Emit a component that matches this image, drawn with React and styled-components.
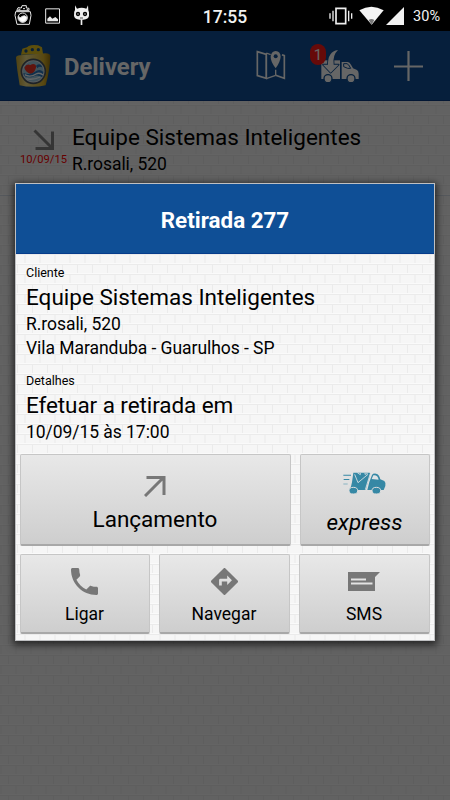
import React from "react";
import styled, { createGlobalStyle, css } from "styled-components";

const brickTile = encodeURIComponent(
  `<svg xmlns="http://www.w3.org/2000/svg" width="15" height="20">
    <rect width="15" height="20" fill="#f6f6f6"/>
    <path d="M0 .5H15M0 10.5H15M1.5 1V10M9 11V20" stroke="#ebebeb" fill="none"/>
    <path d="M0 9.5H15M0 19.5H15" stroke="#fafafa" fill="none"/>
  </svg>`
);

const App = () => {
  return (
    <Screen>
      <GlobalStyle />

      <StatusBar>
        <StatusLeft>
          <FlaskIcon />
          <PictureIcon />
          <CyanIcon />
        </StatusLeft>
        <Clock>17:55</Clock>
        <StatusRight>
          <VibrateIcon />
          <WifiIcon />
          <SignalIcon />
          <Battery>30%</Battery>
        </StatusRight>
      </StatusBar>

      <Page>
        <Toolbar>
          <Logo />
          <AppName>Delivery</AppName>
          <Actions>
            <MapIcon />
            <TruckAction>
              <TruckIcon />
              <Badge>1</Badge>
            </TruckAction>
            <PlusIcon />
          </Actions>
        </Toolbar>

        <ListItem>
          <ItemDate>
            <ArrowIcon $color="#858585" $down />
            <span>10/09/15</span>
          </ItemDate>
          <div>
            <Name>Equipe Sistemas Inteligentes</Name>
            <ItemAddress>R.rosali, 520</ItemAddress>
          </div>
        </ListItem>

        <Overlay>
          <Dialog>
            <DialogTitle>Retirada 277</DialogTitle>

            <Details>
              <Label>Cliente</Label>
              <Name>Equipe Sistemas Inteligentes</Name>
              <Line>R.rosali, 520</Line>
              <Line>Vila Maranduba - Guarulhos - SP</Line>
              <Label $spaced>Detalhes</Label>
              <Name $tight>Efetuar a retirada em</Name>
              <Line>10/09/15 às 17:00</Line>
            </Details>

            <MainButtons>
              <Button $large>
                <ArrowIcon $color="#777" />
                <span>Lançamento</span>
              </Button>
              <Button $large $express>
                <ExpressIcon />
                <span>express</span>
              </Button>
            </MainButtons>

            <SmallButtons>
              <Button>
                <PhoneIcon />
                <span>Ligar</span>
              </Button>
              <Button>
                <DirectionsIcon />
                <span>Navegar</span>
              </Button>
              <Button>
                <SmsIcon />
                <span>SMS</span>
              </Button>
            </SmallButtons>
          </Dialog>
        </Overlay>
      </Page>
    </Screen>
  );
};

export default App;

/* icons */

const FlaskIcon = () => (
  <svg width="18" height="21" viewBox="41 17 54 63" fill="none" stroke="#e8e8e8" strokeWidth="3">
    <path d="M49 34L53 25L63 26L65 19H78V26L86 27V34Z" />
    <path d="M46 37H90L92 48L87 75H50L44 48Z" />
    <circle cx="67" cy="55" r="14" />
    <path d="M54 52Q60 58 66 51Q73 46 80 54Q79 67 67 68Q55 66 54 52Z" fill="#fff" />
    <path d="M54 30H60M68 28H74M79 31H84" />
  </svg>
);

const PictureIcon = () => (
  <svg width="15" height="16" viewBox="135 23 45 48">
    <path d="M137 25.500H178.500V68.500H137Z" fill="none" stroke="#e8e8e8" strokeWidth="3" />
    <path d="M142 63V55L150 48L157 55L166 50L174 57V63Z" fill="#e8e8e8" />
  </svg>
);

const CyanIcon = () => (
  <svg width="17" height="21" viewBox="222 17 51 63">
    <path d="M228 18L234 28Q248 23 262 28L267 18L268 33Q271 37 270 49Q269 59 253 61H242Q226 59 225 49Q224 37 228 32Z" fill="#eee" />
    <circle cx="237" cy="44" r="6.500" fill="#000" />
    <circle cx="258" cy="44" r="6.500" fill="#000" />
    <circle cx="237" cy="44" r="2" fill="#ddd" />
    <circle cx="258" cy="44" r="2" fill="#ddd" />
    <path d="M243 56H252" stroke="#000" strokeWidth="2" />
    <path d="M247.500 60V77" stroke="#eee" strokeWidth="5" />
  </svg>
);

const VibrateIcon = () => (
  <svg width="24" height="18" viewBox="86 19 72 54" fill="none" stroke="#eee">
    <path d="M107 23H136V69H107Z" strokeWidth="5" />
    <path d="M98 30V62M145 30V62" strokeWidth="4" />
    <path d="M89 38V54M154 38V54" strokeWidth="4" />
  </svg>
);

const WifiIcon = () => (
  <svg width="25" height="19" viewBox="176 18 75 57">
    <path d="M177 31Q213 10 250 31L214 74Z" fill="#f4f4f4" />
    <path d="M205 60Q213 54 222 60L214 74Z" fill="#777" />
  </svg>
);

const SignalIcon = () => (
  <svg width="18" height="18" viewBox="258 21 54 54">
    <path d="M258 75H312V21Z" fill="#f2f2f2" />
  </svg>
);

const Logo = () => (
  <svg width="38" height="44" viewBox="42 132 114 132">
    <defs>
      <linearGradient id="bottle" x1="0" x2="1" y1="0" y2="0">
        <stop offset="0" stopColor="#c9a52c" />
        <stop offset=".3" stopColor="#f2e08a" />
        <stop offset=".8" stopColor="#dcb52c" />
        <stop offset="1" stopColor="#97730f" />
      </linearGradient>
    </defs>
    <path d="M63 164L67 146Q82 143 86 138Q97 133 114 136L126 142L129 162Z" fill="#e6c41f" />
    <path d="M48 173Q48 167 60 166L137 160Q150 160 151 168Q150 209 137 256Q96 265 59 256Q51 211 48 173Z" fill="url(#bottle)" />
    <circle cx="78" cy="153" r="5" fill="#174f86" />
    <circle cx="97" cy="149" r="5" fill="#174f86" />
    <circle cx="115" cy="149" r="5" fill="#174f86" />
    <circle cx="100" cy="214" r="36" fill="#e4e9ec" stroke="#4a5560" strokeWidth="5" />
    <circle cx="100" cy="214" r="31" fill="#a3cfe4" />
    <path d="M73 203Q79 190 91 195Q104 188 109 199Q105 219 93 222Q77 217 73 203Z" fill="#ef3325" />
    <path d="M108 197Q122 186 127 202Q116 197 112 205Z" fill="#2877bd" />
    <path d="M70 219Q90 226 105 215Q119 205 130 216L127 232Q112 222 99 230Q84 235 72 227Z" fill="#2877bd" />
    <path d="M74 224Q91 234 108 222Q119 216 129 225M79 236Q97 241 121 231" fill="none" stroke="#fff" strokeWidth="4" />
  </svg>
);

const MapIcon = () => (
  <svg width="30" height="31" viewBox="78 63 90 93" fill="none" stroke="#fff" strokeWidth="4">
    <path d="M122 77L109 72M109 72V149M137 122V139M109 149L137 139" />
    <path d="M82 68L109 76V148L82 140ZM137 139L163 148V80L156 77" strokeWidth="5" />
    <path d="M137 118Q121 96 122 83Q124 67 137 66Q151 67 152 83Q151 98 137 118Z" fill="#fff" stroke="none" />
    <circle cx="137" cy="82" r="6" fill="#0f4f96" stroke="none" />
  </svg>
);

const TruckIcon = () => (
  <svg width="40" height="34" viewBox="270 57 120 102">
    <path d="M274 91H330V147H274Z" fill="#fff" />
    <path d="M335 96H353Q359 96 363 104L369 115L381 120Q386 123 386 131V147H335Z" fill="#fff" />
    <path d="M341 101H351Q356 102 362 115H353L341 110Z" fill="#fff" stroke="#0f4f96" strokeWidth="3" />
    <path d="M324 60Q293 65 294 104H279L302 128L326 104H311Q307 76 324 60Z" fill="#fff" stroke="#0f4f96" strokeWidth="5" strokeLinejoin="round" />
    <path d="M324 60Q293 65 294 104H279L302 128L326 104H311Q307 76 324 60Z" fill="#fff" />
    <circle cx="294" cy="146" r="12" fill="#fff" stroke="#0f4f96" strokeWidth="4" />
    <circle cx="363" cy="146" r="12" fill="#fff" stroke="#0f4f96" strokeWidth="4" />
  </svg>
);

const PlusIcon = () => (
  <svg width="30" height="30" viewBox="0 0 30 30">
    <path d="M14.500 0V30M0 15.500H29" stroke="#fff" strokeWidth="2.2" />
  </svg>
);

const ArrowIcon = ({ $color, $down }) => (
  <svg width="22" height="22" viewBox="0 0 22 22" fill="none" stroke={$color} strokeWidth="3">
    {$down ? <path d="M1.500 1.500L19 19M2.500 19.500H19.500V2.500" /> : <path d="M1 21L19 3M2.500 2.500H20V20" />}
  </svg>
);

const ExpressIcon = () => (
  <svg width="44" height="23" viewBox="53 34 132 69">
    <g fill="#3688a5">
      <path d="M84 36H133Q136 37 134 43L121 88H73Q78 77 80 65Z" />
      <path d="M132 64L140 43Q143 38 152 39Q162 41 165 56L177 61Q182 65 180 76L175 88H126Z" />
      <path d="M54 42H77V45H54ZM55 55H72V58H55ZM54 69H67V71H54Z" />
    </g>
    <path d="M88 41L98 66L128 41M96 36L105 42V37M119 37V41L127 38M135 38L120 87" fill="none" stroke="#e0e5e7" strokeWidth="2.5" />
    <path d="M139 55L144 44Q157 42 160 57Z" fill="#dfe4e6" />
    <g fill="#3688a5" stroke="#dedede" strokeWidth="3">
      <ellipse cx="84" cy="90" rx="13" ry="10" />
      <ellipse cx="153" cy="90" rx="13" ry="10" />
    </g>
  </svg>
);

const PhoneIcon = () => (
  <svg width="27" height="27" viewBox="3 3 18 18" fill="#777">
    <path d="M6.620 10.790c1.440 2.830 3.760 5.140 6.590 6.590l2.200-2.200c.27-.27.67-.36 1.020-.24 1.120.37 2.330.57 3.570.57.55 0 1 .45 1 1V20c0 .55-.45 1-1 1C10.610 21 3 13.390 3 4c0-.55.45-1 1-1h3.500c.55 0 1 .45 1 1 0 1.250.2 2.450.57 3.570.11.35.03.74-.25 1.020z" />
  </svg>
);

const DirectionsIcon = () => (
  <svg width="27" height="27" viewBox="2 2 20 20" fill="#777">
    <path d="M21.710 11.290l-9-9a1 1 0 0 0-1.420 0l-9 9a1 1 0 0 0 0 1.420l9 9a1 1 0 0 0 1.420 0l9-9a1 1 0 0 0 0-1.420zM14 14.500V12h-4v3H8v-4a1 1 0 0 1 1-1h5V7.500l3.500 3.500z" />
  </svg>
);

const SmsIcon = () => (
  <svg width="32" height="27" viewBox="0 0 32 27">
    <path d="M0 4H32L27 9V23H0Z" fill="#777" />
    <path d="M3 11.500H18M3 15.500H24.500" stroke="#e2e2e2" strokeWidth="2" />
  </svg>
);

/* styles */

const GlobalStyle = createGlobalStyle`
  * {
    box-sizing: border-box;
  }

  body {
    margin: 0;
    background: #000;
    font-family: Roboto, "Liberation Sans", sans-serif;
  }

  svg {
    display: block;
    flex-shrink: 0;
  }
`;

const bricks = css`
  background-image: url("data:image/svg+xml,${brickTile}");
`;

const Screen = styled.div`
  width: 450px;
  height: 800px;
  display: flex;
  flex-direction: column;
  overflow: hidden;
`;

const StatusBar = styled.header`
  height: 31px;
  display: grid;
  grid-template-columns: 1fr auto 1fr;
  align-items: center;
  padding: 0 10px 0 14px;
  background: #000;
  color: #f2f2f2;
`;

const StatusLeft = styled.div`
  display: flex;
  align-items: center;
  gap: 13px;
`;

const Clock = styled.div`
  font-size: 17.5px;
  font-weight: 500;
  padding: 2px 4px 0 0;
`;

const StatusRight = styled.div`
  display: flex;
  align-items: center;
  justify-content: flex-end;
  gap: 2px;

  svg:first-child {
    margin-right: 4px;
  }
`;

const Battery = styled.span`
  font-size: 14.5px;
  margin-left: 7px;
  padding-top: 2px;
`;

const Page = styled.main`
  flex: 1;
  position: relative;
  background-color: #f5f5f5;
  ${bricks}
  background-position: 7px 4px;
`;

const Toolbar = styled.div`
  height: 70px;
  display: flex;
  align-items: center;
  padding: 0 26px 0 14px;
  background: #0f4f96;
  border-bottom: 1px solid #063881;
  color: #fff;
`;

const AppName = styled.h1`
  margin: 3px 0 0 12px;
  font-size: 23.8px;
  line-height: 28px;
  font-weight: 700;
`;

const Actions = styled.div`
  display: flex;
  align-items: center;
  margin-left: auto;
  gap: 34px;
`;

const TruckAction = styled.div`
  position: relative;
`;

const Badge = styled.span`
  position: absolute;
  left: -10px;
  top: -5px;
  width: 16px;
  height: 21px;
  border-radius: 8px;
  background: #ff1b17;
  font-size: 15px;
  line-height: 22px;
  text-align: center;
`;

const ListItem = styled.div`
  height: 95px;
  display: flex;
  padding: 22px 0 0 20px;
  border-bottom: 1px solid #d5dbe6;
`;

const ItemDate = styled.div`
  width: 52px;
  display: flex;
  flex-direction: column;
  gap: 2px;
  padding-top: 6px;
  color: #f00;
  font-size: 11.2px;
  line-height: 14px;

  svg {
    margin-left: 13px;
  }
`;

const Name = styled.div`
  font-size: 22.5px;
  line-height: 28px;
  letter-spacing: ${({ $tight }) => ($tight ? "-0.08px" : "0.01px")};
  color: #000;
  white-space: nowrap;
`;

const Line = styled.div`
  font-size: 17.5px;
  line-height: 24px;
  letter-spacing: -0.05px;
  color: #000;
`;

const ItemAddress = styled(Line)`
  line-height: 26px;
`;

const Overlay = styled.div`
  position: absolute;
  inset: 0;
  padding: 152px 15px 0;
  background: rgba(0, 0, 0, 0.6);
`;

const Dialog = styled.section`
  height: 458px;
  border: 1px solid #bfc0c2;
  background-color: #f6f6f6;
  ${bricks}
  background-position: 0 0;
  box-shadow: 0 2px 7px 2px rgba(0, 0, 0, 0.6);
`;

const DialogTitle = styled.h2`
  margin: 0;
  height: 70px;
  background: #0f4f96;
  border-bottom: 1px solid #063c8b;
  color: #fff;
  font-size: 22.4px;
  line-height: 72px;
  font-weight: 700;
  text-align: center;
`;

const Details = styled.div`
  height: 200px;
  padding: 11px 10px 0;
`;

const Label = styled.div`
  font-size: 12.5px;
  line-height: 16px;
  margin-top: ${({ $spaced }) => ($spaced ? "13px" : "0")};
  margin-bottom: 2px;
  color: #000;

  & + ${Name} {
    margin-bottom: 1px;
  }
`;

const MainButtons = styled.div`
  display: grid;
  grid-template-columns: 271px 130px;
  gap: 9px;
  padding: 0 4px;
`;

const SmallButtons = styled.div`
  display: grid;
  grid-template-columns: 130px 131px 131px;
  gap: 9px;
  padding: 8px 4px 0;
`;

const Button = styled.button`
  height: ${({ $large }) => ($large ? "92px" : "80px")};
  display: flex;
  flex-direction: column;
  align-items: center;
  justify-content: flex-start;
  gap: ${({ $large }) => ($large ? "8px" : "8px")};
  margin: 0;
  padding: ${({ $large }) => ($large ? "20px 1px 0 0" : "13px 1px 0 0")};
  border: 1px solid #c6c6c6;
  border-bottom: 2px solid #a8a8a8;
  border-radius: 2px;
  background: linear-gradient(#e8e8e8, #cecece);
  color: #000;
  font-family: inherit;
  font-size: ${({ $large }) => ($large ? "22.5px" : "17.5px")};
  line-height: ${({ $large }) => ($large ? "28px" : "22px")};

  ${({ $express }) =>
    $express &&
    css`
      padding-top: 17px;
      gap: 13px;
      font-style: italic;
    `}
`;
